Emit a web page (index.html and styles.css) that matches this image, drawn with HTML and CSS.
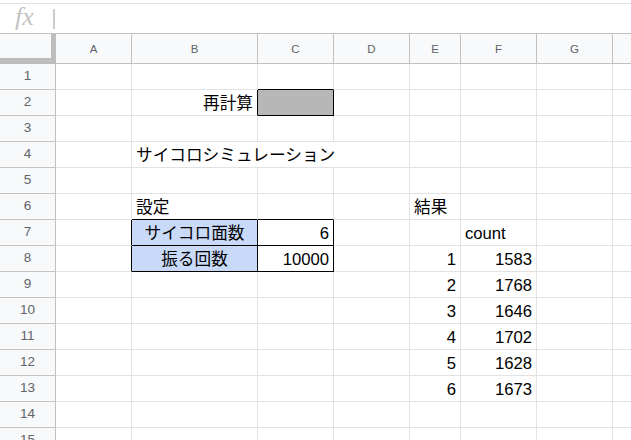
FILE: index.html
```html
<!DOCTYPE html>
<html lang="ja">
<head>
<meta charset="utf-8">
<title>サイコロシミュレーション</title>
<link rel="stylesheet" href="styles.css">
</head>
<body>
<div class="top-gap"></div>
<div class="fbar">
  <div class="fx">fx</div>
  <div class="sep"></div>
</div>
<div class="sheet">
  <div class="corner"></div>
  <div class="colh">A</div><div class="colh">B</div><div class="colh">C</div><div class="colh">D</div><div class="colh">E</div><div class="colh">F</div><div class="colh">G</div><div class="colh"></div>

  <div class="rowh">1</div>
  <div class="cell"></div><div class="cell"></div><div class="cell bB"></div><div class="cell"></div><div class="cell"></div><div class="cell"></div><div class="cell"></div><div class="cell"></div>

  <div class="rowh">2</div>
  <div class="cell"></div><div class="cell r bR">再計算</div><div class="cell btn bR bB"></div><div class="cell"></div><div class="cell"></div><div class="cell"></div><div class="cell"></div><div class="cell"></div>

  <div class="rowh">3</div>
  <div class="cell"></div><div class="cell"></div><div class="cell"></div><div class="cell"></div><div class="cell"></div><div class="cell"></div><div class="cell"></div><div class="cell"></div>

  <div class="rowh">4</div>
  <div class="cell"></div><div class="cell span3">サイコロシミュレーション</div><div class="cell"></div><div class="cell"></div><div class="cell"></div><div class="cell"></div>

  <div class="rowh">5</div>
  <div class="cell"></div><div class="cell"></div><div class="cell"></div><div class="cell"></div><div class="cell"></div><div class="cell"></div><div class="cell"></div><div class="cell"></div>

  <div class="rowh">6</div>
  <div class="cell"></div><div class="cell bB">設定</div><div class="cell bB"></div><div class="cell"></div><div class="cell">結果</div><div class="cell"></div><div class="cell"></div><div class="cell"></div>

  <div class="rowh">7</div>
  <div class="cell bR"></div><div class="cell ctr blue bR bB">サイコロ面数</div><div class="cell r bR bB">6</div><div class="cell"></div><div class="cell"></div><div class="cell">count</div><div class="cell"></div><div class="cell"></div>

  <div class="rowh">8</div>
  <div class="cell bR"></div><div class="cell ctr blue bR bB">振る回数</div><div class="cell r bR bB">10000</div><div class="cell"></div><div class="cell r">1</div><div class="cell r">1583</div><div class="cell"></div><div class="cell"></div>

  <div class="rowh">9</div>
  <div class="cell"></div><div class="cell"></div><div class="cell"></div><div class="cell"></div><div class="cell r">2</div><div class="cell r">1768</div><div class="cell"></div><div class="cell"></div>

  <div class="rowh">10</div>
  <div class="cell"></div><div class="cell"></div><div class="cell"></div><div class="cell"></div><div class="cell r">3</div><div class="cell r">1646</div><div class="cell"></div><div class="cell"></div>

  <div class="rowh">11</div>
  <div class="cell"></div><div class="cell"></div><div class="cell"></div><div class="cell"></div><div class="cell r">4</div><div class="cell r">1702</div><div class="cell"></div><div class="cell"></div>

  <div class="rowh">12</div>
  <div class="cell"></div><div class="cell"></div><div class="cell"></div><div class="cell"></div><div class="cell r">5</div><div class="cell r">1628</div><div class="cell"></div><div class="cell"></div>

  <div class="rowh">13</div>
  <div class="cell"></div><div class="cell"></div><div class="cell"></div><div class="cell"></div><div class="cell r">6</div><div class="cell r">1673</div><div class="cell"></div><div class="cell"></div>

  <div class="rowh">14</div>
  <div class="cell"></div><div class="cell"></div><div class="cell"></div><div class="cell"></div><div class="cell"></div><div class="cell"></div><div class="cell"></div><div class="cell"></div>

  <div class="rowh">15</div>
  <div class="cell"></div><div class="cell"></div><div class="cell"></div><div class="cell"></div><div class="cell"></div><div class="cell"></div><div class="cell"></div><div class="cell"></div>
</div>
</body>
</html>
```
FILE: styles.css
```css
html, body {
  margin: 0;
  padding: 0;
  background: #fff;
}
body {
  width: 631px;
  height: 440px;
  overflow: hidden;
  font-family: "Liberation Sans", Arial, "Noto Sans CJK JP", sans-serif;
}
.top-gap {
  height: 3px;
}
.fbar {
  height: 29px;
  border-top: 1px solid #e1e1e1;
  border-bottom: 1px solid #c0c0c0;
  display: flex;
  align-items: center;
}
.fx {
  width: 53px;
  box-sizing: border-box;
  padding-left: 15px;
  padding-bottom: 4px;
  font-family: "Liberation Serif", "Times New Roman", serif;
  font-style: italic;
  font-size: 26px;
  line-height: 24px;
  color: #c4c4c4;
}
.sep {
  width: 2px;
  height: 20px;
  background: #cbcbcb;
}
.sheet {
  display: grid;
  grid-template-columns: 56px 76px 126px 76px 76px 51px 76px 76px 40px;
  grid-template-rows: 30px;
  grid-auto-rows: 26px;
}
.corner {
  background: #f8f9fa;
  border-right: 5px solid #bdbdbd;
  border-bottom: 6px solid #bdbdbd;
}
.colh {
  background: #f8f9fa;
  border-right: 1px solid #c0c0c0;
  border-bottom: 1px solid #c0c0c0;
  display: flex;
  align-items: center;
  justify-content: center;
  font-family: "Liberation Sans", Arial, sans-serif;
  font-size: 11.5px;
  color: #5f6368;
}
.rowh {
  background: #f8f9fa;
  border-right: 1px solid #c0c0c0;
  border-bottom: 1px solid #c4c4c4;
  display: flex;
  align-items: center;
  justify-content: center;
  padding-bottom: 3px;
  box-sizing: border-box;
  font-family: "Liberation Sans", Arial, sans-serif;
  font-size: 13.5px;
  color: #5f6368;
}
.cell {
  box-sizing: border-box;
  min-width: 0;
  border-right: 1px solid #e2e2e2;
  border-bottom: 1px solid #e2e2e2;
  display: flex;
  align-items: flex-end;
  padding: 0 4px 3px 4px;
  font-size: 16.67px;
  line-height: 17px;
  white-space: nowrap;
  color: #000;
}
.r {
  justify-content: flex-end;
}
.ctr {
  justify-content: center;
}
.span3 {
  grid-column: span 3;
}
.blue {
  background: #c9daf8;
}
.btn {
  background: #b7b7b7;
}
.bR {
  border-right-color: #000;
}
.bB {
  border-bottom-color: #000;
}
```
